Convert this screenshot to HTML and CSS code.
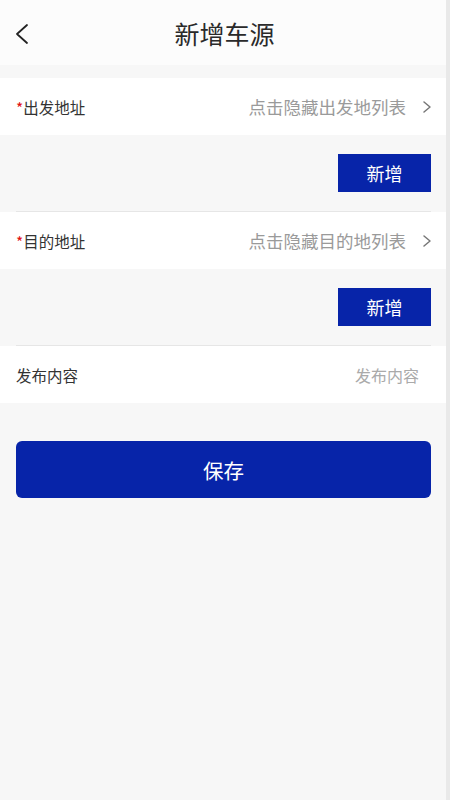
FILE: index.html
```html
<!DOCTYPE html>
<html lang="zh-CN">
<head>
<meta charset="utf-8">
<title>新增车源</title>
<link rel="stylesheet" href="styles.css">
</head>
<body>
<div class="app">
  <header class="topbar">
    <span class="back">
      <svg width="16" height="22" viewBox="0 0 16 22"><path d="M13 2 L3 11 L13 20" fill="none" stroke="#222" stroke-width="1.8" stroke-linecap="round" stroke-linejoin="round"/></svg>
    </span>
    <h1 class="title">新增车源</h1>
  </header>

  <section class="form">
    <div class="row">
      <span class="label"><span class="req">*</span>出发地址</span>
      <span class="value">点击隐藏出发地列表
        <svg class="chev" width="10" height="14" viewBox="0 0 10 14"><path d="M2 2 L8 7 L2 12" fill="none" stroke="#777" stroke-width="1.5" stroke-linecap="round" stroke-linejoin="round"/></svg>
      </span>
    </div>
    <div class="addzone">
      <button class="addbtn">新增</button>
    </div>
    <div class="divider"></div>

    <div class="row">
      <span class="label"><span class="req">*</span>目的地址</span>
      <span class="value">点击隐藏目的地列表
        <svg class="chev" width="10" height="14" viewBox="0 0 10 14"><path d="M2 2 L8 7 L2 12" fill="none" stroke="#777" stroke-width="1.5" stroke-linecap="round" stroke-linejoin="round"/></svg>
      </span>
    </div>
    <div class="addzone">
      <button class="addbtn">新增</button>
    </div>
    <div class="divider"></div>

    <div class="row">
      <span class="label">发布内容</span>
      <span class="placeholder">发布内容</span>
    </div>
  </section>

  <div class="savewrap">
    <button class="save">保存</button>
  </div>
</div>
</body>
</html>
```

FILE: styles.css
```css
* { box-sizing: border-box; }
html, body { margin: 0; padding: 0; }
body {
  font-family: "Noto Sans CJK SC", "Noto Sans", sans-serif;
  background: #f7f7f7;
  color: #333;
}
.app {
  min-height: 800px;
  width: 450px;
  background: #f7f7f7;
  border-right: 4px solid #e9e9e9;
}
.topbar {
  height: 65px;
  background: #fcfcfc;
  display: flex;
  align-items: center;
  justify-content: center;
  position: relative;
}
.back {
  position: absolute;
  left: 14px;
  top: 23px;
  display: flex;
}
.title {
  margin: 0;
  font-size: 25px;
  font-weight: 400;
  color: #2a2a2a;
  margin-left: 3px;
}
.form {
  margin-top: 13px;
}
.row {
  height: 57px;
  background: #fff;
  display: flex;
  align-items: center;
  justify-content: space-between;
  padding: 0 14px 0 16px;
}
.label {
  font-size: 15.5px;
  color: #333;
}
.req {
  color: #e01010;
}
.value {
  font-size: 17.5px;
  color: #9a9a9a;
  display: flex;
  align-items: center;
  gap: 16px;
}
.chev { display: block; }
.placeholder {
  font-size: 16px;
  color: #aaa;
  margin-right: 13px;
}
.addzone {
  display: flex;
  justify-content: flex-end;
  padding: 19px 15px 19px 0;
}
.addbtn {
  width: 93px;
  height: 38px;
  border: none;
  border-radius: 0;
  background: #0724a9;
  color: #fff;
  font-family: inherit;
  font-size: 18px;
  padding: 0;
}
.divider {
  height: 1px;
  background: #e6e6e6;
  margin: 0 15px 0 16px;
}
.savewrap {
  padding: 38px 15px 0 16px;
}
.save {
  width: 100%;
  height: 57px;
  border: none;
  border-radius: 6px;
  background: #0724a9;
  color: #fff;
  font-family: inherit;
  font-size: 20.5px;
  padding: 0;
}
```
